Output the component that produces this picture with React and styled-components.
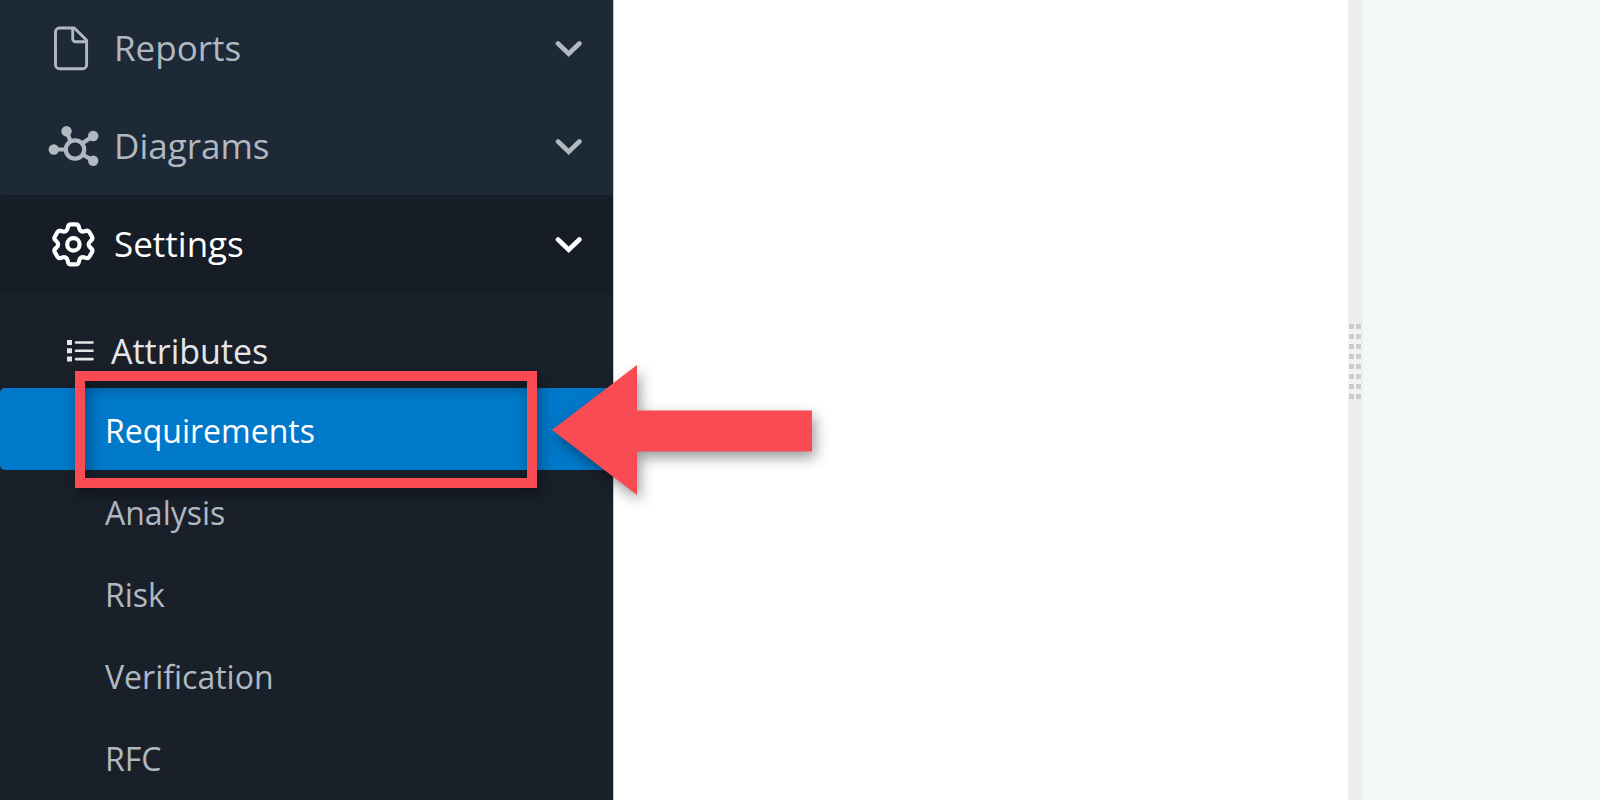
import React from "react";
import styled, { createGlobalStyle } from "styled-components";

const GlobalStyle = createGlobalStyle`
  *, *::before, *::after { box-sizing: border-box; }
  body { margin: 0; background: #ffffff; }
`;

const Page = styled.div`
  display: flex;
  min-height: 100vh;
  overflow: hidden;
  font-family: "Open Sans", "Noto Sans", sans-serif;
`;

const Sidebar = styled.nav`
  flex: 0 0 613px;
  margin-top: -1px;
  background: #1e2938;
  display: flex;
  flex-direction: column;
  position: relative;
  z-index: 1;
`;

const SectionButton = styled.button`
  display: flex;
  align-items: center;
  width: 100%;
  height: 98px;
  padding: 0 30px 0 48px;
  border: 0;
  border-radius: 4px;
  background: ${(p) => (p.$active ? "#161d27" : "transparent")};
  color: ${(p) => (p.$active ? "#ffffff" : "#b0b8c0")};
  font-family: inherit;
  font-size: 35px;
  line-height: 48px;
  text-align: left;
  cursor: pointer;
`;

const IconSlot = styled.span`
  display: flex;
  flex: none;
  width: 66px;
`;

const SectionLabel = styled.span`
  flex: 1;
`;

const Submenu = styled.div`
  flex: 1;
  background: #19202a;
`;

const GroupTitle = styled.h2`
  display: flex;
  align-items: center;
  gap: 17px;
  height: 95px;
  margin: 0;
  padding: 21px 0 0 66px;
  color: #e4e6e8;
  font-size: 34px;
  font-weight: 400;
  line-height: 46px;
`;

const ItemList = styled.ul`
  list-style: none;
  margin: 0;
  padding: 0;
`;

const Item = styled.li`
  position: relative;
`;

const ItemLink = styled.a`
  display: flex;
  align-items: center;
  height: 82px;
  padding: 4px 0 0 105px;
  border-radius: 5px;
  background: ${(p) => (p.$active ? "#0079ca" : "transparent")};
  color: ${(p) => (p.$active ? "#ffffff" : "#b0b8c0")};
  font-size: 32px;
  line-height: 44px;
  text-decoration: none;
`;

const HighlightBox = styled.span`
  position: absolute;
  top: -17px;
  bottom: -18px;
  left: 75px;
  right: 76px;
  z-index: 1;
  border: 10px solid #f94b53;
  filter: drop-shadow(3px 6px 7px rgba(0, 0, 0, 0.4));
  pointer-events: none;
`;

const Arrow = styled.svg`
  position: absolute;
  top: -23px;
  left: 552px;
  z-index: 1;
  overflow: visible;
  filter: drop-shadow(3px 6px 7px rgba(0, 0, 0, 0.4));
  pointer-events: none;
`;

const Content = styled.main`
  flex: 1;
  border-left: 1px solid #c4c7ca;
  background: #ffffff;
`;

const Splitter = styled.div`
  flex: 0 0 15px;
  display: flex;
  flex-direction: column;
  align-items: flex-start;
  padding-top: 324px;
  background: #eeeeee;
`;

const Grip = styled.div`
  display: grid;
  grid-template-columns: repeat(2, 5px);
  grid-auto-rows: 5px;
  gap: 5px 2px;
  padding: 0 1px;
  background: #f2f2f2;
`;

const GripDot = styled.span`
  background: #cccccc;
`;

const Aside = styled.aside`
  flex: 0 0 237px;
  background: #f3f7f8;
`;

function FileIcon() {
  return (
    <svg width="48" height="48" viewBox="0 0 48 48" fill="none" stroke="currentColor" strokeWidth="2.9" strokeLinejoin="round" aria-hidden="true">
      <path d="M11.500 4H26.300L38.600 16.300V40.700a4 4 0 0 1-4 4H11.500a4 4 0 0 1-4-4V8a4 4 0 0 1 4-4Z" />
      <path d="M24.700 4V14.800a3 3 0 0 0 3 3H38.600" />
    </svg>
  );
}

function DiagramIcon() {
  return (
    <svg width="52" height="48" viewBox="0 0 52 48" fill="none" stroke="currentColor" strokeWidth="4.2" aria-hidden="true">
      <circle cx="27" cy="27.5" r="9.2" />
      <path d="M6 27.500H17.500M18.700 9.500L22.600 19.500M45 14L34 21.500M45 38.500L34.600 32.500" />
      <g fill="currentColor" stroke="none">
        <circle cx="5.8" cy="27.5" r="5.2" />
        <circle cx="18.500" cy="9.2" r="5.200" />
        <circle cx="45.200" cy="14" r="5.200" />
        <circle cx="45.200" cy="38.700" r="5.200" />
      </g>
    </svg>
  );
}

// Six teeth, each with two outer corners, separated by a notch; all corners rounded.
function gearPath(cx, cy) {
  const corners = [];
  for (let i = 0; i < 6; i += 1) {
    [[-14, 20.6, 2.6], [14, 20.6, 2.6], [23.5, 15.4, 2.2], [36.5, 15.4, 2.2]].forEach(([offset, radius, round]) => {
      const a = ((i * 60 + offset - 90) * Math.PI) / 180;
      corners.push({ x: cx + radius * Math.cos(a), y: cy + radius * Math.sin(a), round });
    });
  }
  const toward = (from, to) => {
    const len = Math.hypot(to.x - from.x, to.y - from.y);
    const t = Math.min(from.round / len, 0.5);
    return `${(from.x + (to.x - from.x) * t).toFixed(2)} ${(from.y + (to.y - from.y) * t).toFixed(2)}`;
  };
  return (
    corners
      .map((c, i) => {
        const prev = corners[(i + corners.length - 1) % corners.length];
        const next = corners[(i + 1) % corners.length];
        return `${i ? "L" : "M"}${toward(c, prev)}Q${c.x.toFixed(2)} ${c.y.toFixed(2)} ${toward(c, next)}`;
      })
      .join("") + "Z"
  );
}

function GearIcon() {
  return (
    <svg width="50" height="48" viewBox="0 0 50 48" fill="none" stroke="currentColor" strokeWidth="4.2" strokeLinejoin="round" aria-hidden="true">
      <path d={gearPath(25.4, 24.4)} />
      <circle cx="25.4" cy="24.4" r="6.2" />
    </svg>
  );
}

function ListIcon() {
  return (
    <svg width="28" height="24" viewBox="0 0 28 24" fill="currentColor" aria-hidden="true">
      <path d="M1 1h5v5H1zM1 9.300h5v5H1zM1 17.600h5v5H1z" />
      <path d="M10 3.500H26.500M10 11.800H26.500M10 20.100H26.500" stroke="currentColor" strokeWidth="2.600" strokeLinecap="round" />
    </svg>
  );
}

function Chevron() {
  return (
    <svg width="28" height="20" viewBox="0 0 28 20" fill="none" stroke="currentColor" strokeWidth="4.6" strokeLinecap="round" strokeLinejoin="miter" aria-hidden="true">
      <path d="M3 5.500L13.700 15.700L24.400 5.500" />
    </svg>
  );
}

const sections = [
  { label: "Reports", Icon: FileIcon },
  { label: "Diagrams", Icon: DiagramIcon },
  { label: "Settings", Icon: GearIcon, active: true },
];

const attributes = ["Requirements", "Analysis", "Risk", "Verification", "RFC"];

export default function App() {
  return (
    <Page>
      <GlobalStyle />
      <Sidebar aria-label="Main">
        {sections.map(({ label, Icon, active }) => (
          <SectionButton key={label} type="button" $active={active} aria-expanded={Boolean(active)}>
            <IconSlot>
              <Icon />
            </IconSlot>
            <SectionLabel>{label}</SectionLabel>
            <Chevron />
          </SectionButton>
        ))}
        <Submenu>
          <GroupTitle>
            <ListIcon />
            Attributes
          </GroupTitle>
          <ItemList>
            {attributes.map((name, index) => (
              <Item key={name}>
                <ItemLink href={`#${name.toLowerCase()}`} $active={index === 0} aria-current={index === 0 ? "page" : undefined}>
                  {name}
                </ItemLink>
                {index === 0 && (
                  <>
                    <HighlightBox />
                    <Arrow width="260" height="130" viewBox="0 0 260 130" aria-hidden="true">
                      <path d="M0 65L85 0V45.500H260V86.500H85V130Z" fill="#f94b53" />
                    </Arrow>
                  </>
                )}
              </Item>
            ))}
          </ItemList>
        </Submenu>
      </Sidebar>
      <Content />
      <Splitter>
        <Grip>
          {Array.from({ length: 16 }, (_, i) => (
            <GripDot key={i} />
          ))}
        </Grip>
      </Splitter>
      <Aside />
    </Page>
  );
}
